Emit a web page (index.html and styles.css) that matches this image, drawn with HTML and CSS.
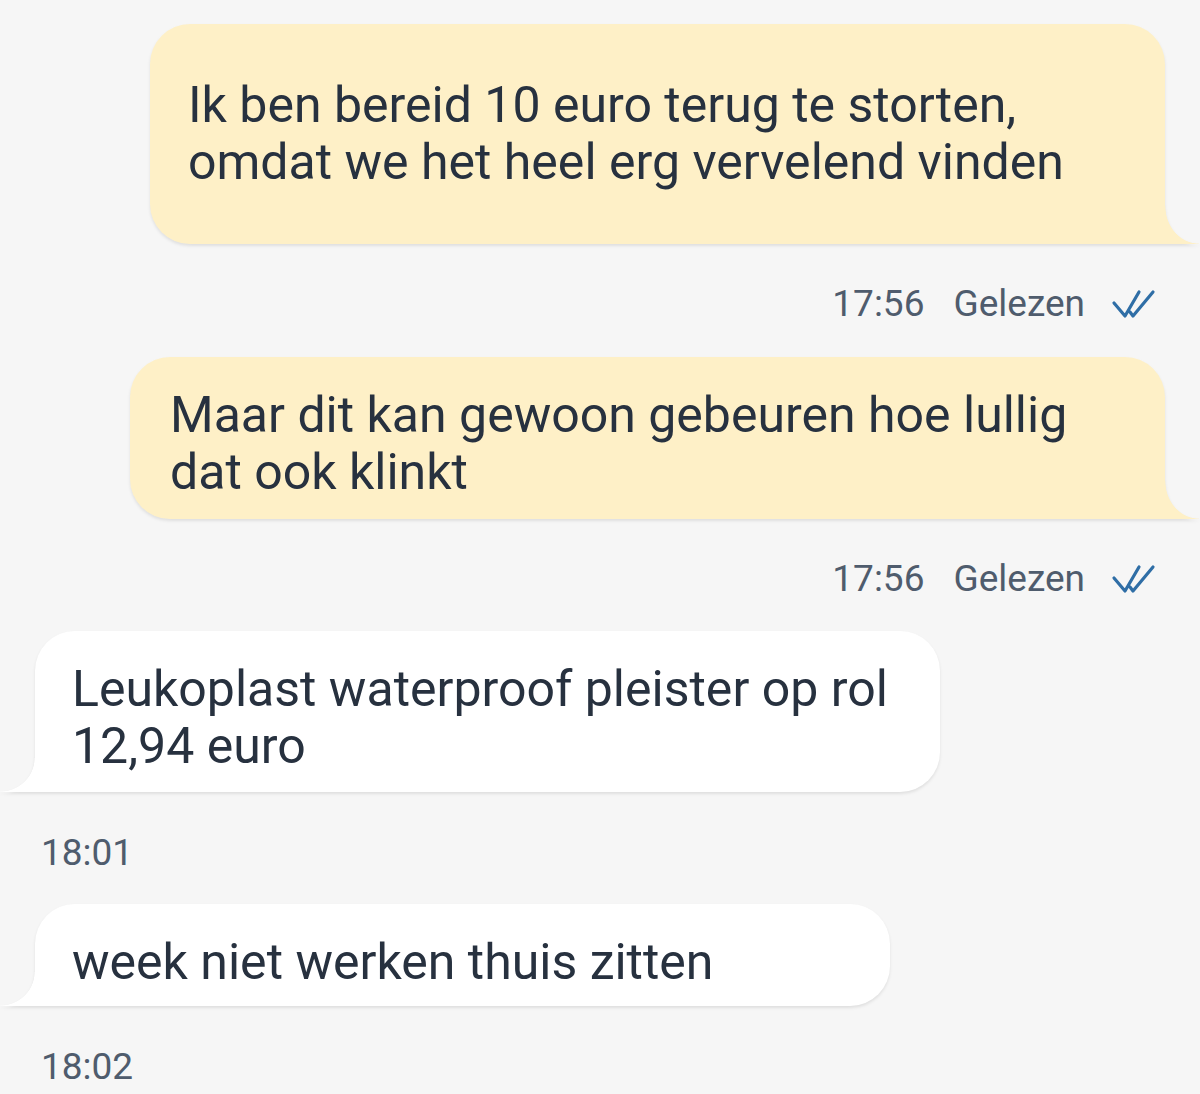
FILE: index.html
```html
<!DOCTYPE html>
<html lang="nl">
<head>
<meta charset="utf-8">
<title>Chat</title>
<link rel="stylesheet" href="styles.css">
</head>
<body>
<div class="chat">
  <div class="bubble out b1">Ik ben bereid 10 euro terug te storten,<br>omdat we het heel erg vervelend vinden</div>
  <div class="meta out">
    <span class="time">17:56</span><span class="status">Gelezen</span>
    <svg class="ticks" viewBox="0 0 46 30" width="46" height="30"><path d="M3 14 L14 27 L28 3 M19 23 L22 27 L42 3" fill="none" stroke="#2f6ea6" stroke-width="3.2" stroke-linecap="round" stroke-linejoin="round"/></svg>
  </div>

  <div class="bubble out b2">Maar dit kan gewoon gebeuren hoe lullig<br>dat ook klinkt</div>
  <div class="meta out">
    <span class="time">17:56</span><span class="status">Gelezen</span>
    <svg class="ticks" viewBox="0 0 46 30" width="46" height="30"><path d="M3 14 L14 27 L28 3 M19 23 L22 27 L42 3" fill="none" stroke="#2f6ea6" stroke-width="3.2" stroke-linecap="round" stroke-linejoin="round"/></svg>
  </div>

  <div class="bubble in b3">Leukoplast waterproof pleister op rol<br>12,94 euro</div>
  <div class="meta in"><span class="time">18:01</span></div>

  <div class="bubble in b4">week niet werken thuis zitten</div>
  <div class="meta in"><span class="time">18:02</span></div>
</div>
</body>
</html>
```
FILE: styles.css
```css
* { box-sizing: border-box; }
html, body { margin: 0; padding: 0; }
body {
  background: #f6f6f6;
  font-family: Roboto, "Noto Sans", sans-serif;
  width: 1200px;
  height: 1094px;
  overflow: hidden;
}
.chat {
  display: flex;
  flex-direction: column;
  padding: 24px 35px 0 35px;
}
.bubble {
  position: relative;
  font-size: 50px;
  line-height: 57px;
  color: #27313f;
  white-space: nowrap;
  padding: 30px 40px 17px 40px;
  border-radius: 40px;
  filter: drop-shadow(0 2px 1.5px rgba(0,0,0,0.09));
}
.bubble.out {
  align-self: flex-end;
  background: #fef0c7;
  border-bottom-right-radius: 0;
}
.bubble.out::after {
  content: "";
  position: absolute;
  right: -34px;
  bottom: 0;
  width: 34px;
  height: 38px;
  background: radial-gradient(ellipse 34px 38px at 100% 0, transparent 98%, #fef0c7 100%);
}
.bubble.in {
  align-self: flex-start;
  background: #ffffff;
  border-bottom-left-radius: 0;
  padding-left: 37px;
}
.bubble.in::after {
  content: "";
  position: absolute;
  left: -35px;
  bottom: 0;
  width: 35px;
  height: 34px;
  background: radial-gradient(ellipse 35px 34px at 0 0, transparent 98%, #ffffff 100%);
}
.b1 { width: 1015px; padding: 53px 40px 53px 38px; }
.b2 { width: 1035px; margin-top: 35px; padding-bottom: 18px; }
.b3 { width: 905px; margin-top: 34px; }
.b4 { width: 855px; margin-top: 33px; padding-bottom: 15px; }

.meta {
  display: flex;
  align-items: center;
  height: 40px;
  line-height: 40px;
  margin-top: 40px;
  margin-bottom: -2px;
  font-size: 37px;
  color: #4f5c6d;
}
.meta.out {
  justify-content: flex-end;
  padding-right: 8px;
}
.meta.in {
  justify-content: flex-start;
  padding-left: 6px;
  margin-top: 41px;
}
.status { margin-left: 29px; }
.ticks { margin-left: 26px; display: block; }
```
